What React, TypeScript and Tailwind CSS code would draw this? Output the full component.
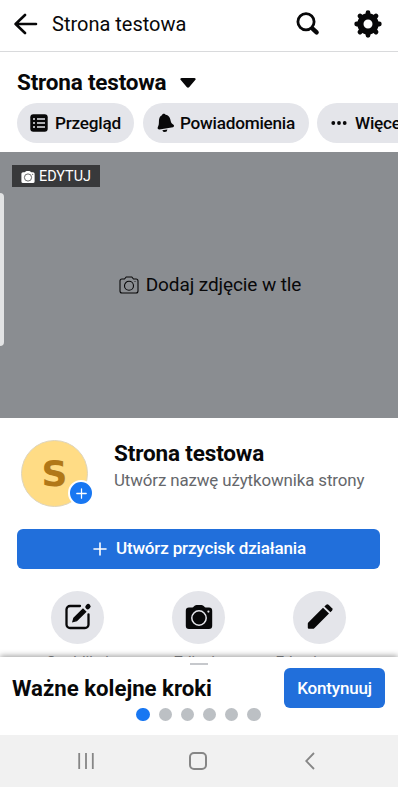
import type { ReactNode } from "react";

const CameraSolid = ({ className, ring }: { className: string; ring: string }) => (
    <svg viewBox="0 0 28 28" className={className}>
        <path d="M4 4.500h3.200q1 0 1.600-.9Q9.800 2 11.500 2h5q1.700 0 2.700 1.600.6.900 1.600.9H24a3.200 3.200 0 0 1 3.200 3.200v15.100A3.200 3.200 0 0 1 24 26H4a3.200 3.200 0 0 1-3.200-3.200V7.700A3.200 3.200 0 0 1 4 4.500z" fill="currentColor" />
        <circle cx="14" cy="15" r="7.2" fill="none" stroke={ring} strokeWidth="1.5" />
        <circle cx="23.4" cy="8.6" r="1.1" fill={ring} />
    </svg>
);

const Plus = ({ className }: { className: string }) => (
    <svg viewBox="0 0 14 14" className={className} fill="none" stroke="currentColor" strokeWidth="1.6" strokeLinecap="round">
        <path d="M7 1v12M1 7h12" />
    </svg>
);

const Chip = ({ className, icon, name }: { className: string; icon: ReactNode; name: string }) => (
    <div className={`flex h-10 shrink-0 items-center rounded-full bg-[#e4e5ea] text-[17.2px] font-medium tracking-[-0.25px] ${className}`}>
        {icon}
        <span className="pt-px whitespace-nowrap">{name}</span>
    </div>
);

const Action = ({ icon, name }: { icon: ReactNode; name: string }) => (
    <div className="flex w-[121px] flex-col items-center">
        <div className="flex size-[53px] items-center justify-center rounded-full bg-[#e4e5ea] pb-px">{icon}</div>
        <span className="mt-[9px] text-[15.2px] leading-[18px] whitespace-nowrap text-[#8a8c90]">{name}</span>
    </div>
);

export default function App() {
    return (
        <div className="h-[787px] w-[400px] overflow-hidden bg-white">
            <div className="flex h-[787px] w-[398px] flex-col overflow-hidden font-['Roboto',sans-serif] text-[#080809]">
                <header className="flex h-[52px] shrink-0 items-center border-b border-[#d9dadc] pl-[14px] pb-[4px]">
                    <svg viewBox="0 0 24 22" className="h-[22px] w-6" fill="none" stroke="currentColor" strokeWidth="2.6" strokeLinecap="round" strokeLinejoin="round">
                        <path d="M22 11H2M11 2 1.6 11 11 20" />
                    </svg>
                    <h1 className="ml-[14px] pt-px text-[20px]">Strona testowa</h1>
                    <svg viewBox="0 0 24 24" className="ml-auto size-6" fill="none" stroke="currentColor" strokeLinecap="round">
                        <circle cx="10" cy="9.8" r="8.1" strokeWidth="2.8" />
                        <path d="m16.8 16.8 3.8 3.6" strokeWidth="4.4" />
                    </svg>
                    <svg viewBox="0 0 28 28" className="mr-4 ml-[34px] size-7">
                        <circle cx="14" cy="14" r="7.6" fill="none" stroke="currentColor" strokeWidth="6.2" />
                        <path d="M14 2.7v3M14 22.3v3M2.7 14h3M22.3 14h3M6 6l2 2M20 20l2 2M6 22l2-2M20 8l2-2" stroke="currentColor" strokeWidth="4.8" strokeLinecap="round" />
                    </svg>
                </header>

                <section className="h-[100px] shrink-0 pl-[17px]">
                    <div className="flex h-[51px] items-center pt-[10px]">
                        <h2 className="text-[22.5px] font-bold tracking-[-0.2px]">Strona testowa</h2>
                        <svg viewBox="0 0 16 10" className="ml-[14px] h-[10px] w-4">
                            <path d="M1.5 0h13q2 .5.7 2L9.3 9Q8 10.5 6.7 9L.8 2Q-.5.5 1.5 0z" fill="currentColor" />
                        </svg>
                    </div>
                    <div className="flex gap-[9px]">
                        <Chip
                            className="w-[117px] gap-[7px] pl-[13px]"
                            name="Przegląd"
                            icon={
                                <svg viewBox="0 0 18 18" className="size-[18px]">
                                    <rect x=".3" y=".3" width="17.4" height="17.4" rx="3" fill="currentColor" />
                                    <path d="M3 5h2M7 5h8M3 9h2M7 9h8M3 13h2M7 13h8" stroke="#e4e5ea" strokeWidth="1.4" />
                                </svg>
                            }
                        />
                        <Chip
                            className="w-[166px] gap-[5px] pl-[14px]"
                            name="Powiadomienia"
                            icon={
                                <svg viewBox="0 0 18 20" className="h-5 w-[18px]" fill="currentColor">
                                    <path d="M4.9 2.3C5 .5 8 .1 8.5 1.8c3.6.7 4.8 3.4 5.2 6.2.3 2 1.3 2.9 2.8 3.8 1 .7.6 2.1-.5 2.4L2.5 16.4c-1.4.1-2.4-1-1.7-2.2 1-1.8 1.1-3.1 1.1-5.4 0-2.9.7-5.3 3-6.5z" />
                                    <path d="M5.3 17.2 10.4 16.5q-.2 2.6-2.6 2.6-1.8 0-2.5-1.9z" />
                                </svg>
                            }
                        />
                        <Chip
                            className="-ml-px w-[120px] gap-[8px] pl-[14px]"
                            name="Więcej"
                            icon={
                                <svg viewBox="0 0 16 4" className="h-1 w-4" fill="currentColor">
                                    <circle cx="2.3" cy="2" r="1.9" />
                                    <circle cx="8" cy="2" r="1.9" />
                                    <circle cx="13.7" cy="2" r="1.9" />
                                </svg>
                            }
                        />
                    </div>
                </section>

                <section className="relative flex h-[266px] shrink-0 items-center justify-center bg-[#8a8d91] pl-[22px]">
                    <div className="absolute top-[13px] left-3 flex h-[22px] w-[88px] items-center gap-1 bg-[#38393b] pt-px pl-[9px] text-[14.4px] text-white">
                        <CameraSolid className="size-[14px]" ring="#38393b" />
                        EDYTUJ
                    </div>
                    <div className="absolute top-[41px] left-0 h-[153px] w-1 rounded-r bg-[#e2e3e4]" />
                    <svg viewBox="0 0 20 18" className="h-[18px] w-5" fill="none" stroke="currentColor" strokeWidth="1.1">
                        <path d="M3 3h2.5L7.2 1h5.6l1.7 2H17a2 2 0 0 1 2 2v10a2 2 0 0 1-2 2H3a2 2 0 0 1-2-2V5a2 2 0 0 1 2-2z" />
                        <circle cx="10" cy="9.8" r="4.5" />
                        <circle cx="16" cy="5.6" r=".5" fill="currentColor" stroke="none" />
                    </svg>
                    <span className="ml-[7px] pt-px text-[19px] tracking-[-0.1px]">Dodaj zdjęcie w tle</span>
                </section>

                <section className="h-[239px] shrink-0 overflow-hidden pt-[22px]">
                    <div className="flex pl-[21px]">
                        <div className="relative flex size-[67px] items-center justify-center rounded-full border border-[#ded5bd] bg-[#ffdc85] font-['DejaVu_Sans',sans-serif] text-[36px] leading-none font-bold text-[#b17818]">
                            S
                            <div className="absolute top-[39px] left-[46px] flex size-[26px] items-center justify-center rounded-full border-2 border-white bg-[#1877f2] text-white">
                                <Plus className="size-[11px]" />
                            </div>
                        </div>
                        <div className="pl-[26px]">
                            <h2 className="text-[22.5px] leading-[27px] font-bold tracking-[-0.15px]">Strona testowa</h2>
                            <p className="mt-px text-[16.9px] leading-6 tracking-[-0.12px] text-[#65676b]">Utwórz nazwę użytkownika strony</p>
                        </div>
                    </div>
                    <button className="mt-[22px] ml-[17px] flex h-10 w-[363px] items-center justify-center gap-[9px] rounded-md bg-[#216fdb] pl-[2px] text-[17px] font-medium tracking-[-0.15px] text-white">
                        <Plus className="size-[14px]" />
                        <span>Utwórz przycisk działania</span>
                    </button>
                    <div className="mt-[22px] flex pl-[17px]">
                        <Action
                            name="Opublikuj"
                            icon={
                                <svg viewBox="0 0 28 28" className="size-7" fill="none" stroke="currentColor" strokeWidth="2.3" strokeLinecap="round">
                                    <path d="M16 3H6A3.5 3.5 0 0 0 2.5 6.5v15A3.5 3.5 0 0 0 6 25h15a3.5 3.5 0 0 0 3.5-3.5v-10" />
                                    <path d="m9 18.5 1-3.3L19 6.3l2.6 2.5-9 8.8z" fill="currentColor" strokeWidth="1.4" />
                                    <path d="m23.7 3.9.5-.5" strokeWidth="4.8" />
                                </svg>
                            }
                        />
                        <Action name="Zdjęcie" icon={<CameraSolid className="size-[28px]" ring="#e4e5ea" />} />
                        <Action
                            name="Edytuj stronę"
                            icon={
                                <svg viewBox="0 0 28 28" className="size-7" fill="currentColor">
                                    <path d="M2.3 19.5 17 4.8l6 5.7L8.3 25.2q-.6.6-1.3.6H2.8q-1 0-1-1v-4q0-.7.5-1.3z" />
                                    <path d="m18.4 3.5 1.8-1.8q1.2-1 2.3 0l3.6 3.6q1 1.1 0 2.2l-1.7 1.7z" />
                                </svg>
                            }
                        />
                    </div>
                </section>

                <section className="relative z-10 h-[78px] shrink-0 bg-white shadow-[0_-1px_6px_rgba(0,0,0,0.4)]">
                    <div className="mx-auto flex h-[11px] w-[18px] items-center pt-[3px]">
                        <div className="h-[2px] w-full bg-[#c6c8cc]" />
                    </div>
                    <div className="flex h-10 items-center justify-between pr-[13px] pl-[12px]">
                        <h3 className="pt-[2px] text-[22.2px] font-bold">Ważne kolejne kroki</h3>
                        <button className="h-10 w-[101px] rounded-md bg-[#216fdb] pt-px text-[17px] font-medium tracking-[-0.2px] text-white">Kontynuuj</button>
                    </div>
                    <div className="flex justify-center gap-[8.8px] pr-[1px]">
                        <div className="size-[13.4px] rounded-full bg-[#1877f2]" />
                        <div className="size-[13.4px] rounded-full bg-[#bcc0c4]" />
                        <div className="size-[13.4px] rounded-full bg-[#bcc0c4]" />
                        <div className="size-[13.4px] rounded-full bg-[#bcc0c4]" />
                        <div className="size-[13.4px] rounded-full bg-[#bcc0c4]" />
                        <div className="size-[13.4px] rounded-full bg-[#bcc0c4]" />
                    </div>
                </section>

                <nav className="relative z-20 flex h-[52px] shrink-0 items-center bg-[#f1f1f1] pl-[78px] text-[#868686]">
                    <svg viewBox="0 0 16 18" className="h-[18px] w-4" stroke="currentColor" strokeWidth="1.8">
                        <path d="M1.2 1v16M8 1v16M14.8 1v16" />
                    </svg>
                    <div className="ml-[95px] size-[18px] rounded-[5px] border-2 border-current" />
                    <svg viewBox="0 0 10 18" className="ml-[98px] h-[18px] w-[10px]" fill="none" stroke="currentColor" strokeWidth="1.8">
                        <path d="M9 1 1.2 9 9 17" />
                    </svg>
                </nav>
            </div>
        </div>
    );
}
